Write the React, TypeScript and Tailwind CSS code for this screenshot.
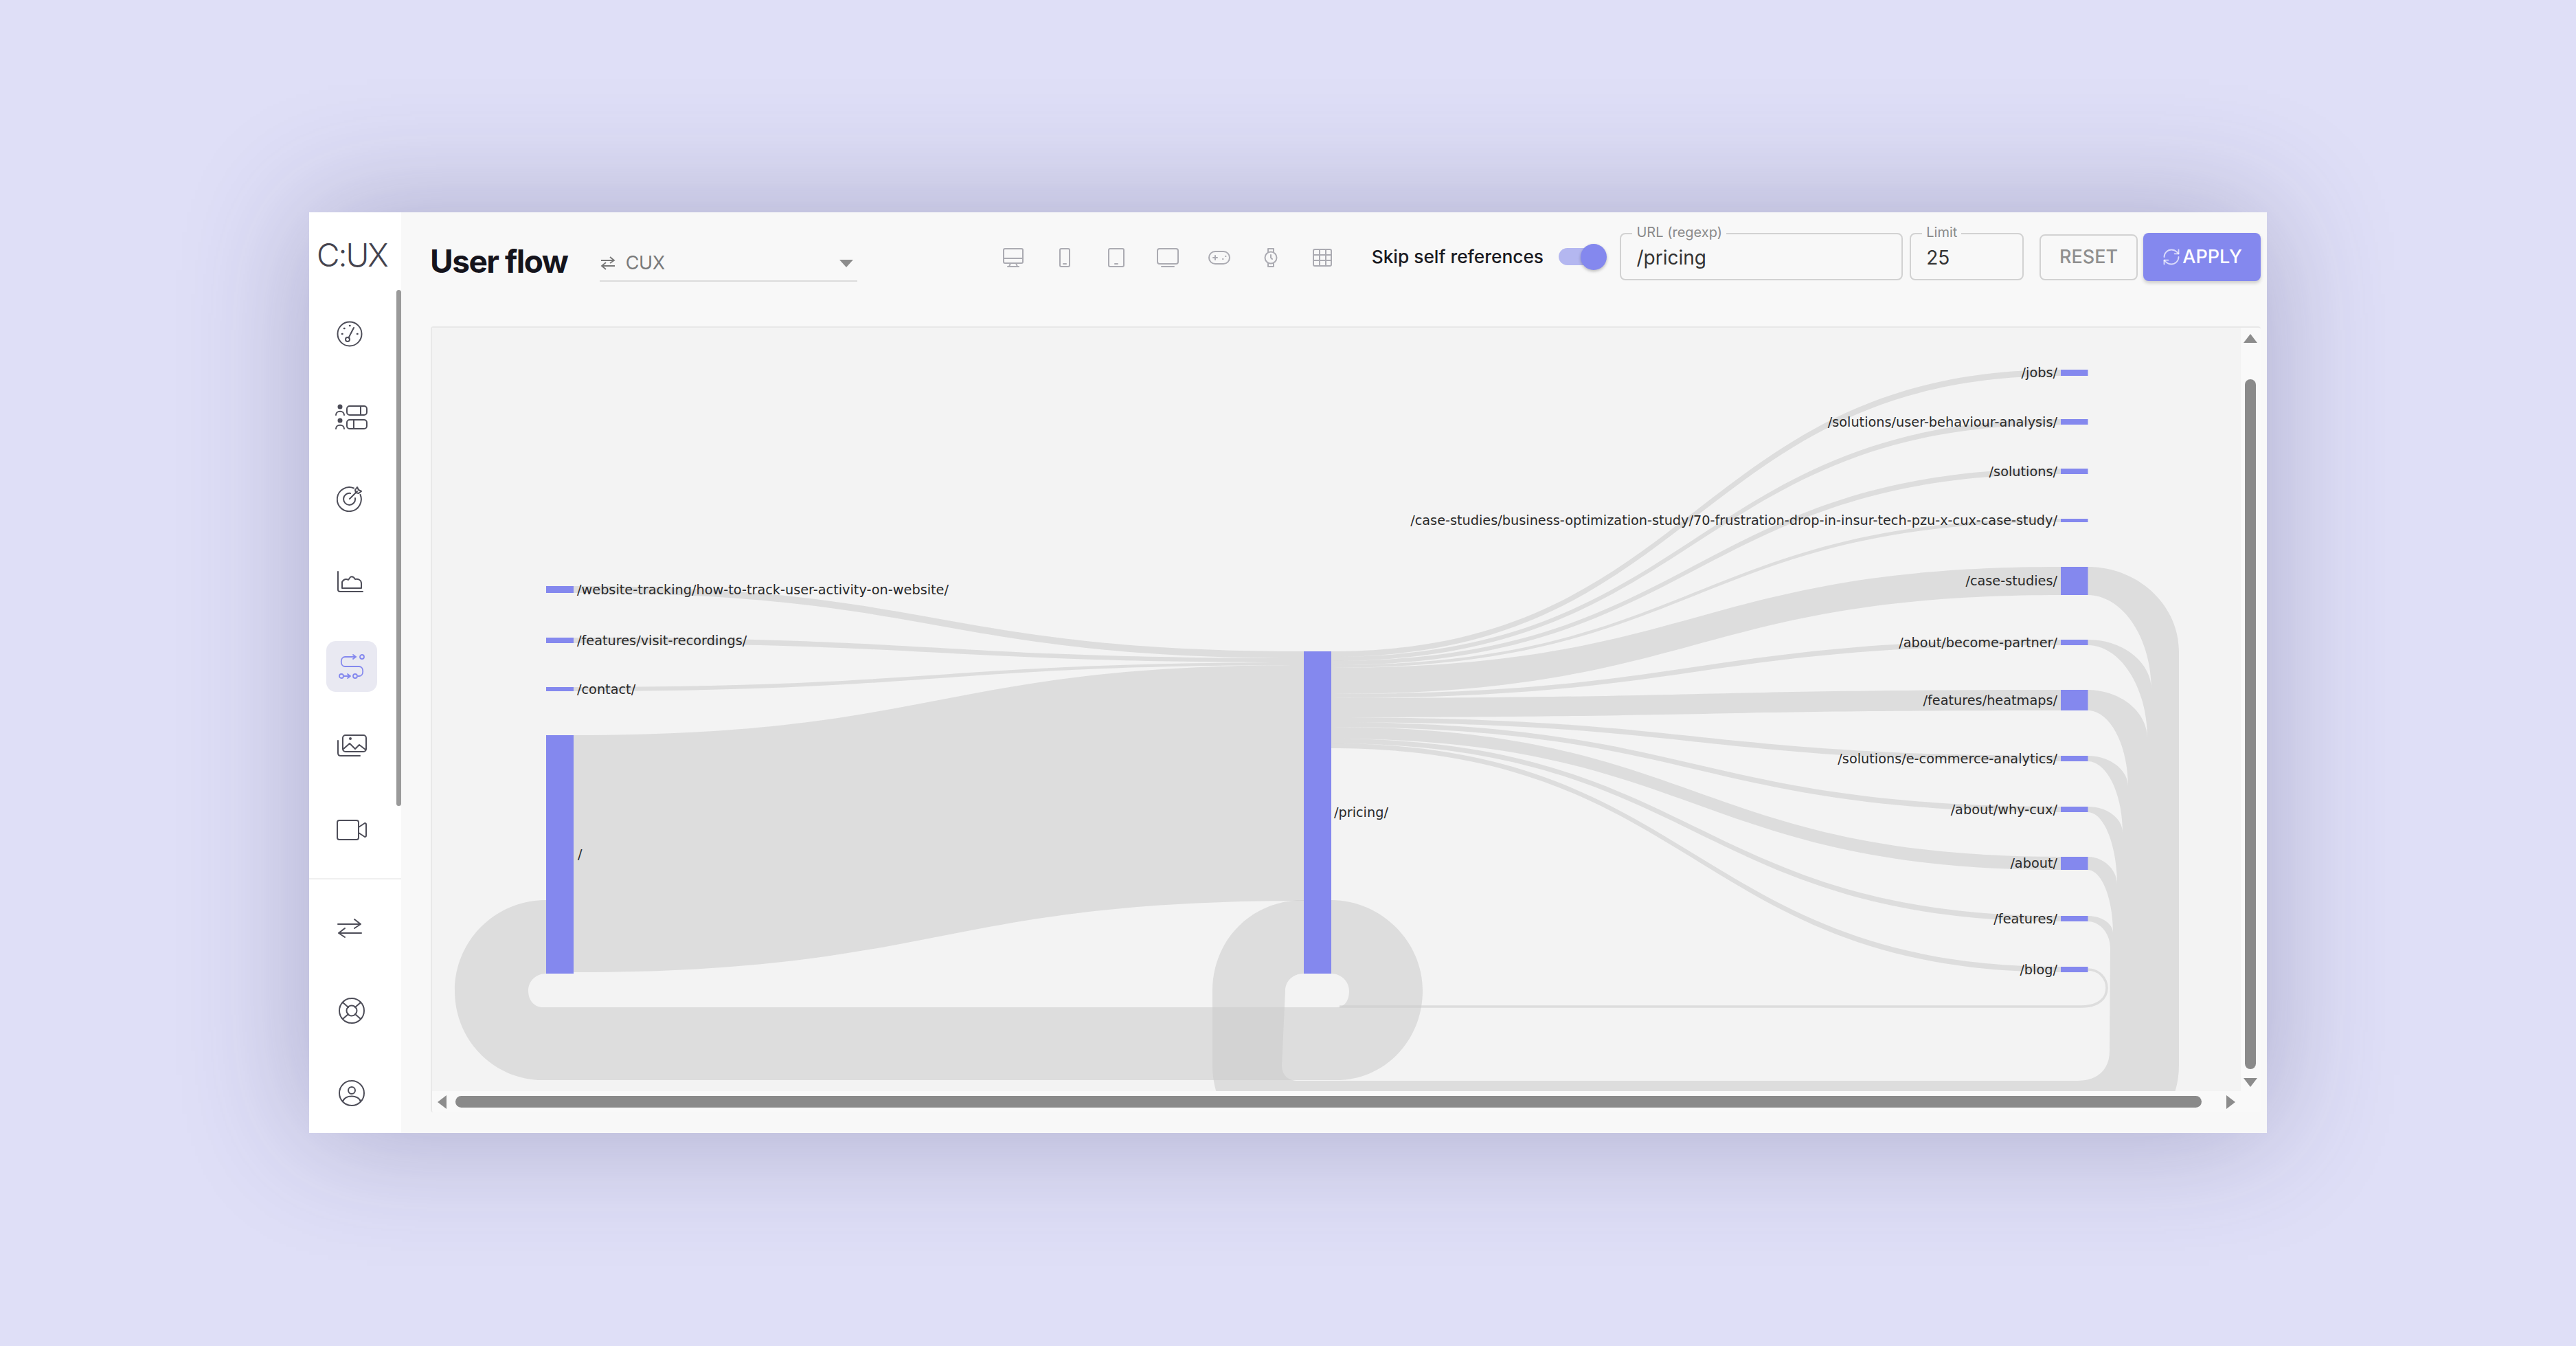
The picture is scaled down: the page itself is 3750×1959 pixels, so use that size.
import React from "react";
import { RefreshCw } from "lucide-react";

const LINK = "#cacaca";
const LO = 0.55;
const q = (x0: number, y0: number, x1: number, y1: number) =>
  ` C ${x0 + 0.55 * (x1 - x0)} ${y0}, ${x1} ${y1 - 0.55 * (y1 - y0)}, ${x1} ${y1}`;
const r = (x0: number, y0: number, x1: number, y1: number) =>
  ` C ${x1} ${y1 - 0.55 * (y1 - y0)}, ${x0 + 0.55 * (x1 - x0)} ${y0}, ${x0} ${y0}`;
const band = (x0: number, t0: number, b0: number, x1: number, t1: number, b1: number) => {
  const m = (x0 + x1) / 2;
  return `M ${x0} ${t0} C ${m} ${t0}, ${m} ${t1}, ${x1} ${t1} L ${x1} ${b1} C ${m} ${b1}, ${m} ${b0}, ${x0} ${b0} Z`;
};

const rightNodes = [
  { label: "/jobs/", t: 538, b: 547, s: 8 },
  { label: "/solutions/user-behaviour-analysis/", t: 610, b: 618, s: 6 },
  { label: "/solutions/", t: 682, b: 690, s: 6 },
  { label: "/case-studies/business-optimization-study/70-frustration-drop-in-insur-tech-pzu-x-cux-case-study/", t: 755, b: 760, s: 4 },
  { label: "/case-studies/", t: 825, b: 866, s: 38 },
  { label: "/about/become-partner/", t: 931, b: 939, s: 6 },
  { label: "/features/heatmaps/", t: 1004, b: 1034, s: 28 },
  { label: "/solutions/e-commerce-analytics/", t: 1100, b: 1108, s: 7 },
  { label: "/about/why-cux/", t: 1174, b: 1182, s: 7 },
  { label: "/about/", t: 1247, b: 1266, s: 17 },
  { label: "/features/", t: 1333, b: 1341, s: 7 },
  { label: "/blog/", t: 1407, b: 1415, s: 7 },
];
const leftNodes = [
  { label: "/website-tracking/how-to-track-user-activity-on-website/", t: 853, b: 863, st: 948, sb: 958 },
  { label: "/features/visit-recordings/", t: 928, b: 936, st: 958, sb: 964 },
  { label: "/contact/", t: 1000, b: 1006, st: 964, sb: 968 },
];

const rightLinks: string[] = [];
{
  let y = 948;
  for (const n of rightNodes) {
    rightLinks.push(band(1938, y, y + n.s, 3000, n.t, n.b));
    y += n.s;
  }
}

const rootLoop =
  "M 795 1310 C 720 1310, 662 1370, 662 1442 C 662 1515, 720 1572, 790 1572 L 1945 1572 C 2015 1572, 2071 1515, 2071 1442 C 2071 1370, 2010 1310, 1938 1310 L 1938 1417 C 1952 1417, 1964 1428, 1964 1442 C 1964 1456, 1958 1466, 1945 1466 L 790 1466 C 778 1466, 769 1456, 769 1442 C 769 1428, 780 1417, 795 1417 Z";

const cycle =
  "M 3039 825" +
  q(3039, 825, 3172, 948) +
  " L 3172 1550 C 3172 1620, 3120 1674, 3040 1674 L 1890 1674 C 1815 1674, 1765 1620, 1765 1550 L 1765 1442 C 1765 1370, 1820 1310, 1898 1310 L 1898 1417 C 1882 1417, 1871 1428, 1871 1442 L 1866 1550 C 1866 1565, 1875 1573, 1890 1573 L 3025 1573 C 3055 1573, 3071 1555, 3071 1530 L 3072 1380" +
  r(3039, 1341, 3072, 1380) +
  " L 3039 1333" +
  q(3039, 1333, 3076, 1358) +
  r(3039, 1266, 3076, 1358) +
  " L 3039 1247" +
  q(3039, 1247, 3082, 1288) +
  r(3039, 1182, 3082, 1288) +
  " L 3039 1174" +
  q(3039, 1174, 3090, 1212) +
  r(3039, 1108, 3090, 1212) +
  " L 3039 1100" +
  q(3039, 1100, 3098, 1145) +
  r(3039, 1034, 3098, 1145) +
  " L 3039 1004" +
  q(3039, 1004, 3126, 1075) +
  r(3039, 939, 3126, 1075) +
  " L 3039 931" +
  q(3039, 931, 3132, 1004) +
  r(3039, 866, 3132, 1004) +
  " Z";

function Sankey() {
  return (
    <svg width={2635} height={1113} viewBox="627 475 2635 1113" className="block font-['DejaVu_Sans',sans-serif] text-[19.3px]">
      {rightLinks.map((d, i) => (
        <path key={i} d={d} fill={LINK} fillOpacity={LO} />
      ))}
      {leftNodes.map((n, i) => (
        <path key={i} d={band(835, n.t, n.b, 1898, n.st, n.sb)} fill={LINK} fillOpacity={LO} />
      ))}
      <path d={band(835, 1070, 1415, 1898, 968, 1311)} fill={LINK} fillOpacity={LO} />
      <path d={rootLoop} fill={LINK} fillOpacity={LO} />
      <path d={cycle} fill={LINK} fillOpacity={LO} />
      <path
        d="M 3039 1411 C 3056 1411, 3067 1424, 3067 1438 C 3067 1453, 3055 1465, 3030 1465 L 1950 1465"
        fill="none"
        stroke={LINK}
        strokeOpacity={LO}
        strokeWidth={3.5}
      />
      <rect x={795} y={1070} width={40} height={347} fill="#8488ee" />
      <rect x={1898} y={948} width={40} height={469} fill="#8488ee" />
      {leftNodes.map((n, i) => (
        <rect key={i} x={795} y={n.t} width={40} height={n.b - n.t} fill="#8488ee" />
      ))}
      {rightNodes.map((n, i) => (
        <rect key={i} x={3000} y={n.t} width={39.5} height={n.b - n.t} fill="#8488ee" />
      ))}
      {leftNodes.map((n, i) => (
        <text key={i} x={840} y={(n.t + n.b) / 2 + 1} dominantBaseline="middle" fill="#2a2a2a">
          {n.label}
        </text>
      ))}
      <text x={841} y={1244} dominantBaseline="middle" fill="#2a2a2a">/</text>
      <text x={1942} y={1183} dominantBaseline="middle" fill="#2a2a2a">/pricing/</text>
      {rightNodes.map((n, i) => (
        <text key={i} x={2995} y={(n.t + n.b) / 2 + 1} textAnchor="end" dominantBaseline="middle" fill="#2a2a2a">
          {n.label}
        </text>
      ))}
    </svg>
  );
}

const Stroke = ({ w, h, children, color = "#4d4d58", sw = 2 }: { w: number; h: number; children: React.ReactNode; color?: string; sw?: number }) => (
  <svg width={w} height={h} viewBox={`0 0 ${w} ${h}`} fill="none" stroke={color} strokeWidth={sw} strokeLinecap="round" strokeLinejoin="round">
    {children}
  </svg>
);

const GaugeIcon = () => (
  <Stroke w={38} h={38}>
    <circle cx={19} cy={19} r={17.5} />
    <circle cx={16} cy={27} r={3} />
    <path d="M17.5 24.5 L25 10" />
    <path d="M8 19h.5M11 11h.5M19 7h.5M30 19h.5" strokeWidth={2.5} />
  </Stroke>
);
const UsersIcon = () => (
  <Stroke w={48} h={38}>
    <circle cx={8} cy={4} r={2.5} fill="#4d4d58" />
    <path d="M2 16c0-7 12-7 12 0" />
    <rect x={18} y={3} width={29} height={13} rx={4} />
    <path d="M38 3v13" />
    <circle cx={8} cy={24} r={2.5} fill="#4d4d58" />
    <path d="M2 36c0-7 12-7 12 0" />
    <rect x={18} y={23} width={29} height={13} rx={4} />
    <path d="M28 23v13" />
  </Stroke>
);
const TargetIcon = () => (
  <Stroke w={38} h={38}>
    <path d="M25 3.5A17.5 17.5 0 1 0 34.5 13" />
    <path d="M20 11A8.5 8.5 0 1 0 27 18" />
    <path d="M19 19 L30 8" />
    <path d="M27 6l3-4 2 4 4 2-4 3-4-1z" />
  </Stroke>
);
const ChartIcon = () => (
  <Stroke w={40} h={32}>
    <path d="M2 1v26c0 2 1 3 3 3h33" />
    <path d="M8 25v-9c2-4 6-5 9-3l3-4c3-2 5 0 7 3 4-1 9 1 9 6v7z" />
  </Stroke>
);
const FlowIcon = () => (
  <Stroke w={38} h={36} color="#8488ee" sw={1.8}>
    <circle cx={34} cy={4} r={3} />
    <path d="M25 4H9C2 4 2 18 9 18h21c7 0 7 14 0 14h-2" />
    <path d="M21 1l4 3-4 3" />
    <circle cx={4} cy={32} r={3} />
    <path d="M8 32h9M13 29l4 3-4 3" />
    <circle cx={24} cy={32} r={3} />
  </Stroke>
);
const ImageChartIcon = () => (
  <Stroke w={44} h={34}>
    <path d="M2 10v18c0 3 1 4 4 4h28" />
    <rect x={9} y={2} width={34} height={24} rx={4} />
    <path d="M10 22l9-8 8 8 6-6 9 7" />
    <circle cx={20} cy={7} r={1} fill="#4d4d58" />
  </Stroke>
);
const VideoIcon = () => (
  <Stroke w={44} h={30}>
    <rect x={1} y={1} width={31} height={28} rx={3} />
    <path d="M32 11l9-6c1 0 2 0 2 2v16c0 2-1 2-2 2l-9-6" />
  </Stroke>
);
const SwapIcon = () => (
  <Stroke w={36} h={30}>
    <path d="M1 9h33M25 2l9 7-9 6" />
    <path d="M35 22H2M11 15l-9 7 9 6" />
  </Stroke>
);
const BuoyIcon = () => (
  <Stroke w={40} h={38}>
    <circle cx={20} cy={19} r={18} />
    <circle cx={20} cy={19} r={7.5} />
    <path d="M7 7l8 7M33 7l-8 7M7 31l8-7M33 31l-8-7" />
  </Stroke>
);
const UserIcon = () => (
  <Stroke w={40} h={38}>
    <circle cx={20} cy={19} r={18} />
    <circle cx={20} cy={15} r={5} />
    <path d="M7 31c3-10 23-10 26 0" />
  </Stroke>
);

const DC = "#ababb2";
const Desktop = () => (
  <Stroke w={30} h={28} color={DC}>
    <rect x={1} y={1} width={28} height={21} rx={2} />
    <path d="M1 15h28M11 22l-2 5M19 22l2 5M7 27h16" />
  </Stroke>
);
const Phone = () => (
  <Stroke w={16} h={28} color={DC}>
    <rect x={1} y={1} width={14} height={26} rx={2} />
    <path d="M6 23h4" />
  </Stroke>
);
const Tablet = () => (
  <Stroke w={24} h={28} color={DC}>
    <rect x={1} y={1} width={22} height={26} rx={2} />
    <path d="M10 23h4" />
  </Stroke>
);
const Tv = () => (
  <Stroke w={32} h={28} color={DC}>
    <rect x={1} y={1} width={30} height={22} rx={3} />
    <path d="M7 27h18" />
  </Stroke>
);
const Pad = () => (
  <Stroke w={32} h={20} color={DC}>
    <rect x={1} y={1} width={30} height={18} rx={9} />
    <path d="M7 10h6M10 7v6M21 12h.5M25 8h.5" />
  </Stroke>
);
const Watch = () => (
  <Stroke w={20} h={28} color={DC}>
    <circle cx={10} cy={14} r={8.5} />
    <path d="M6 6V1h8v5M6 22v5h8v-5M10 10v4l2 2" />
  </Stroke>
);
const TableIcon = () => (
  <Stroke w={28} h={26} color={DC}>
    <rect x={1} y={1} width={26} height={24} rx={2} />
    <path d="M1 9h26M1 17h26M10 1v24M19 1v24" />
  </Stroke>
);

const navTop = [
  { icon: <GaugeIcon />, cls: "mt-[140px] h-[74px] -ml-[6px]" },
  { icon: <UsersIcon />, cls: "mt-[47px] h-[74px] -ml-[2px]" },
  { icon: <TargetIcon />, cls: "mt-[45px] h-[74px] -ml-[6px]" },
  { icon: <ChartIcon />, cls: "mt-[47px] h-[74px] -ml-[4px]" },
  { icon: <FlowIcon />, cls: "mt-[49px] h-[74px] bg-[#e9e9f2] rounded-[14px] w-[74px]" },
  { icon: <ImageChartIcon />, cls: "mt-[41px] h-[74px]" },
  { icon: <VideoIcon />, cls: "mt-[49px] h-[74px]" },
];

function Field({ label, value, cls }: { label: string; value: string; cls: string }) {
  return (
    <div className={`relative h-[69px] rounded-[8px] border-2 border-[#d2d2d2] flex items-center pl-[22px] pt-[2px] ${cls}`}>
      <span className="absolute -top-[16px] left-[16px] bg-[#f8f8f8] px-[6px] text-[20px] leading-[26px] text-[#8a8a8a]">{label}</span>
      <span className="text-[28px] text-[#333]">{value}</span>
    </div>
  );
}

const Tri = ({ d, w, h }: { d: string; w: number; h: number }) => (
  <svg width={w} height={h} viewBox={`0 0 ${w} ${h}`}>
    <path d={d} fill="#8c8c8c" />
  </svg>
);

export default function App() {
  return (
    <div className="w-[3750px] h-[1959px] bg-[#dfdff7] pt-[309px] pl-[450px] overflow-hidden font-['Inter',sans-serif]">
      <div className="w-[2850px] h-[1340px] flex bg-[#f8f8f8] shadow-[0_0_170px_rgba(60,60,110,0.32)]">
        {/* sidebar */}
        <aside className="relative w-[134px] shrink-0 bg-white flex flex-col">
          <div className="absolute left-[127px] top-[113px] w-[7px] h-[751px] rounded-full bg-[#9a9a9a]" />
          <div className="absolute left-[11px] top-[34px] text-[46px] leading-[56px] text-[#44434e] tracking-[-2px] font-light">C:UX</div>
          <div className="h-[971px] flex flex-col items-center pr-[10px] border-b-2 border-[#f0f0f0]">
            {navTop.map((n, i) => (
              <div key={i} className={`flex items-center justify-center shrink-0 ${n.cls}`}>
                {n.icon}
              </div>
            ))}
          </div>
          <div className="flex flex-col items-center pr-[10px] pt-[52px] gap-[82px]">
            <div className="-ml-[6px] h-[38px] flex items-center"><SwapIcon /></div>
            <BuoyIcon />
            <UserIcon />
          </div>
        </aside>

        {/* main */}
        <main className="flex-1 min-w-0 flex flex-col pl-[43px] pr-[9px]">
          <header className="h-[166px] shrink-0 flex items-start pt-[30px]">
            <h1 className="w-[246px] mt-[14px] -ml-[1px] mr-[1px] text-[46px] leading-[54px] font-bold tracking-[-1.5px] text-[#15141c]">User flow</h1>
            <div className="w-[375px] h-[70px] border-b-2 border-[#dcdcdc] flex items-center mt-[1px] pt-[18px]">
              <svg width={22} height={22} viewBox="0 0 22 22" fill="none" stroke="#777" strokeWidth={1.8} className="ml-[1px]">
                <path d="M1 7h19M14 2l6 5-6 4M21 15H2M8 10l-6 5 6 5" />
              </svg>
              <span className="ml-[15px] text-[27px] text-[#7a7a7a] tracking-[-0.5px]">CUX</span>
              <span className="ml-auto mr-[6px]"><Tri w={20} h={11} d="M0 0h20L10 11z" /></span>
            </div>
            <div className="flex ml-[190px] mt-[16px] h-[40px] items-center">
              {[<Desktop />, <Phone />, <Tablet />, <Tv />, <Pad />, <Watch />, <TableIcon />].map((ic, i) => (
                <div key={i} className="w-[75px] flex justify-center">{ic}</div>
              ))}
            </div>
            <div className="ml-[34px] w-[272px] h-[69px] flex items-center text-[26.3px] font-medium text-[#1a1a22] whitespace-nowrap">Skip self references</div>
            <div className="w-[70px] h-[69px] flex items-center relative">
              <div className="w-[58px] h-[25px] rounded-full bg-[#b4b7f0]" />
              <div className="absolute left-[32px] top-[16px] w-[38px] h-[38px] rounded-full bg-[#8488ee] shadow-[0_2px_4px_rgba(0,0,0,0.25)]" />
            </div>
            <Field label="URL (regexp)" value="/pricing" cls="ml-[20px] w-[412px]" />
            <Field label="Limit" value="25" cls="ml-[10px] w-[166px]" />
            <button className="ml-[23px] w-[143px] h-[67px] mt-[2px] rounded-[8px] border-2 border-[#d2d2d2] text-[27px] font-medium text-[#8f8f8f]">RESET</button>
            <button className="ml-[8px] w-[171px] h-[70px] rounded-[8px] bg-[#8488ee] text-[27px] font-medium text-white flex items-center justify-center shadow-[0_3px_5px_rgba(0,0,0,0.18)]">
              <RefreshCw size={28} strokeWidth={1.6} className="text-white/70 mr-[2px]" />
              APPLY
            </button>
          </header>

          <section className="h-[1144px] shrink-0 flex flex-col border-l-2 border-t-2 border-[#e8e8e8] bg-[#f9f9f9] rounded-[4px]">
            <div className="flex flex-1 min-h-0">
              <div className="w-[2633px] h-[1111px] bg-[#f3f3f3] overflow-hidden shrink-0">
                <div className="-ml-[2px] -mt-[2px]"><Sankey /></div>
              </div>
              <div className="flex-1 flex flex-col items-center pr-[1px] pt-[9px]">
                <Tri w={20} h={13} d="M10 0l10 13H0z" />
                <div className="mt-[53px] w-[16px] h-[1004px] rounded-full bg-[#8a8a8a]" />
                <div className="mt-[13px]"><Tri w={20} h={13} d="M0 0h20L10 13z" /></div>
              </div>
            </div>
            <div className="h-[31px] shrink-0 flex items-center pl-[8px]">
              <Tri w={13} h={20} d="M13 0v20L0 10z" />
              <div className="ml-[13px] w-[2542px] h-[17px] rounded-full bg-[#8a8a8a]" />
              <div className="ml-[36px]"><Tri w={13} h={20} d="M0 0l13 10L0 20z" /></div>
            </div>
          </section>
        </main>
      </div>
    </div>
  );
}
